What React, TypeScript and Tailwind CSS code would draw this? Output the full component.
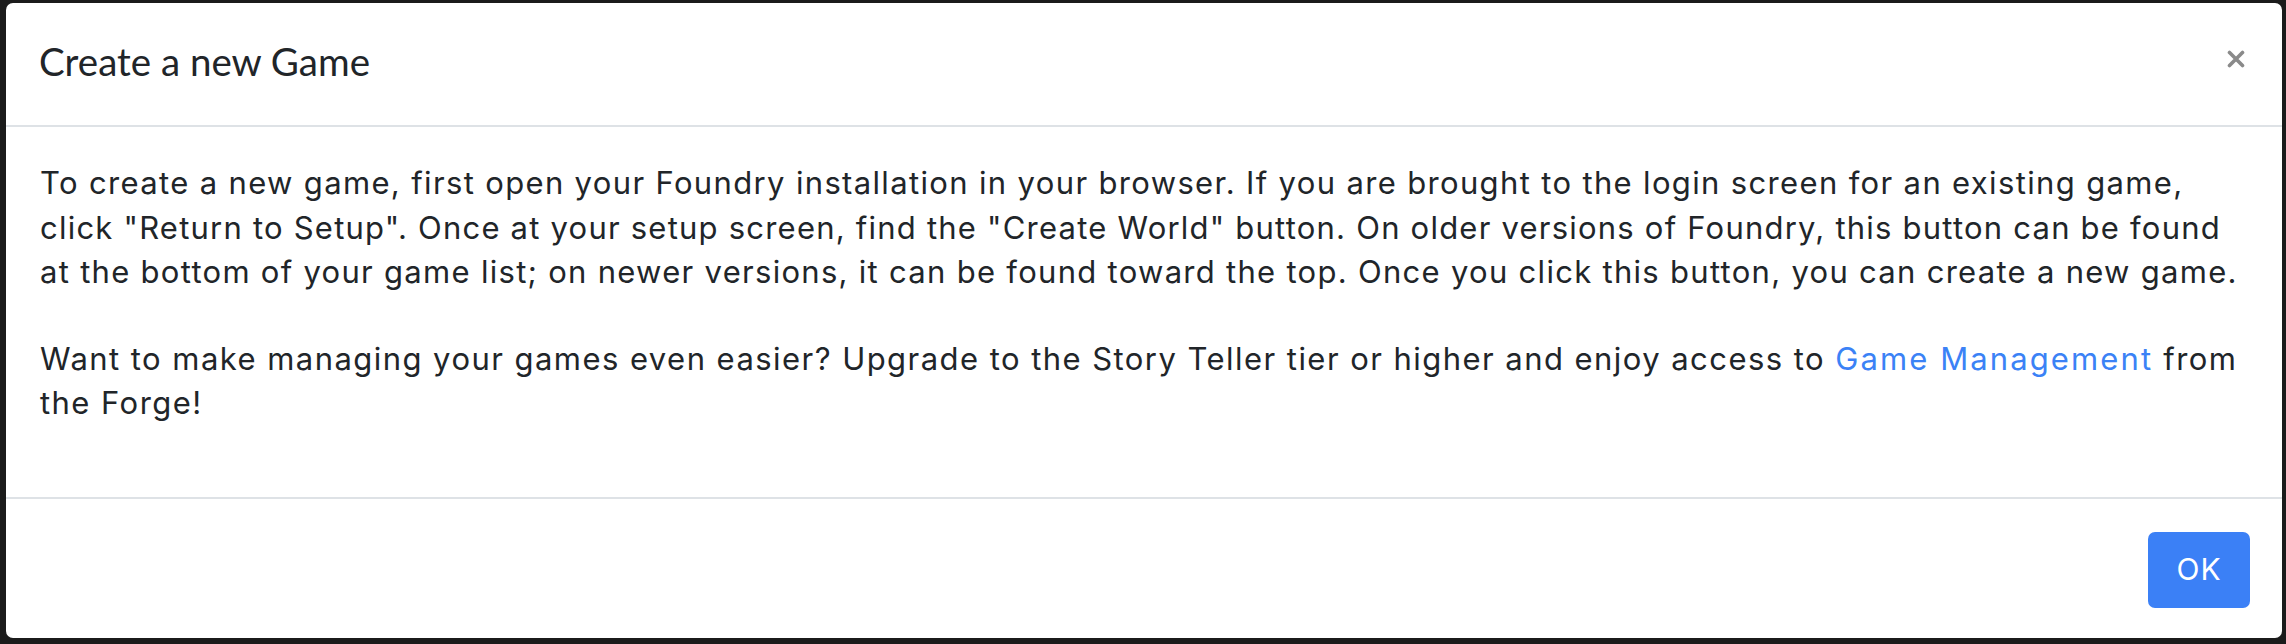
import React from "react";

export default function App() {
  const body = "font-['Inter','Noto_Sans',sans-serif]";
  return (
    <div className="w-[2286px] h-[644px] bg-[#1b1b1b] pt-[3px] pl-[6px] pr-[4px] pb-[6px] flex">
      <div className="flex-1 bg-white rounded-[7px] flex flex-col text-[#212529]">
        {/* header */}
        <div className="h-[124px] px-[33px] flex items-center justify-between border-b-2 border-[#dee2e6]">
          <h1 className="font-['Lato',sans-serif] text-[38.5px] leading-none text-[#212529] pb-[6px]">
            Create a new Game
          </h1>
          <button className="w-[18px] h-[18px] mr-[4px] mb-[10px]" aria-label="Close">
            <svg viewBox="0 0 18 18" className="w-[18px] h-[18px]">
              <path d="M2.5 2.5 L15.5 15.5 M15.5 2.5 L2.5 15.5" stroke="#8a8a8a" strokeWidth="3.6" strokeLinecap="round" />
            </svg>
          </button>
        </div>
        {/* body */}
        <div className={`flex-1 px-[34px] pt-[34px] ${body} text-[31px] leading-[44.6px]`}>
          <p className="mb-[42px]">
            <span className="whitespace-nowrap tracking-[1.35px]">To create a new game, first open your Foundry installation in your browser. If you are brought to the login screen for an existing game,</span>
            <br />
            <span className="whitespace-nowrap tracking-[1.22px]">click "Return to Setup". Once at your setup screen, find the "Create World" button. On older versions of Foundry, this button can be found</span>
            <br />
            <span className="whitespace-nowrap tracking-[1.29px]">at the bottom of your game list; on newer versions, it can be found toward the top. Once you click this button, you can create a new game.</span>
          </p>
          <p>
            <span className="whitespace-nowrap tracking-[1.45px]">Want to make managing your games even easier? Upgrade to the Story Teller tier or higher and enjoy access to <a className="text-[#3b82f6] tracking-[2.1px]" href="#">Game Management</a> from</span>
            <br />
            <span className="whitespace-nowrap tracking-[1.45px]">the Forge!</span>
          </p>
        </div>
        {/* footer */}
        <div className="h-[141px] border-t-2 border-[#dee2e6] flex items-center justify-end px-[32px] pt-[2px]">
          <button className={`h-[76px] w-[102px] rounded-[7px] bg-[#3b80f6] text-white ${body} text-[30px] tracking-[1px]`}>
            OK
          </button>
        </div>
      </div>
    </div>
  );
}
